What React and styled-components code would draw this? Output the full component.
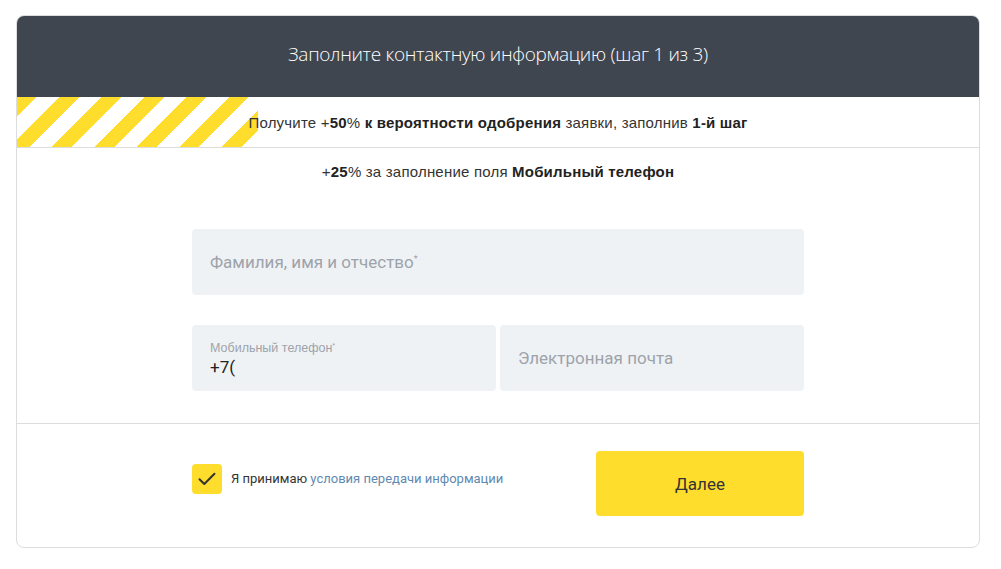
import React from "react";
import styled, { createGlobalStyle } from "styled-components";

const GlobalStyle = createGlobalStyle`
  body {
    margin: 0;
    background: #fff;
    font-family: "Liberation Sans", Arial, sans-serif;
    color: #333;
  }
`;

const App = () => {
  return (
    <>
      <GlobalStyle />
      <Card>
        <Header>Заполните контактную информацию (шаг 1 из 3)</Header>
        <Banner>
          <Stripes />
          <BannerText>
            Получите +<b>50</b>% <b>к вероятности одобрения</b> заявки, заполнив <b>1-й шаг</b>
          </BannerText>
        </Banner>
        <Body>
          <Hint>
            +<b>25</b>% за заполнение поля <b>Мобильный телефон</b>
          </Hint>
          <Form>
            <Field wide>
              <Placeholder>
                Фамилия, имя и отчество<sup>*</sup>
              </Placeholder>
            </Field>
            <Field>
              <SmallLabel>
                Мобильный телефон<sup>*</sup>
              </SmallLabel>
              <Value>+7(</Value>
            </Field>
            <Field>
              <Placeholder>Электронная почта</Placeholder>
            </Field>
          </Form>
        </Body>
        <Footer>
          <FooterInner>
            <Agree>
              <Check>
                <svg width="18" height="14" viewBox="0 0 18 14" fill="none">
                  <path
                    d="M1.5 7.2 L6.3 12 L16.5 1.8"
                    stroke="#333"
                    strokeWidth="2"
                    strokeLinecap="round"
                    strokeLinejoin="round"
                  />
                </svg>
              </Check>
              <AgreeText>
                Я принимаю <Link href="#">условия передачи информации</Link>
              </AgreeText>
            </Agree>
            <NextButton>Далее</NextButton>
          </FooterInner>
        </Footer>
      </Card>
    </>
  );
};

export default App;

/* ------------------------------ */
/*        STYLED COMPONENTS       */
/* ------------------------------ */
const Card = styled.div`
  margin: 15px 0 0 16px;
  width: 962px;
  border: 1px solid #ddd;
  border-radius: 8px;
  overflow: hidden;
  background: #fff;
`;

const Header = styled.div`
  height: 82px;
  margin: -1px -1px 0;
  background: #40464f;
  color: #fff;
  display: flex;
  align-items: center;
  justify-content: center;
  font-family: "Open Sans", sans-serif;
  font-weight: 300;
  font-size: 19px;
  letter-spacing: -0.3px;
  padding-bottom: 4px;
  box-sizing: border-box;
`;

const Banner = styled.div`
  position: relative;
  height: 50px;
  border-bottom: 1px solid #ddd;
  display: flex;
  align-items: center;
  justify-content: center;
`;

const Stripes = styled.div`
  position: absolute;
  left: 0;
  top: 0;
  width: 241px;
  height: 100%;
  background: repeating-linear-gradient(
    135deg,
    #ffdd2d 0 14px,
    transparent 14px 30px
  );
`;

const BannerText = styled.div`
  position: relative;
  font-size: 15px;
  letter-spacing: 0.2px;
  color: #333;
  padding-top: 1px;
  b {
    color: #222;
  }
`;

const Body = styled.div`
  padding: 15px 0 32px;
  display: flex;
  flex-direction: column;
  align-items: center;
  border-bottom: 1px solid #ddd;
`;

const Hint = styled.div`
  font-size: 15px;
  letter-spacing: 0.2px;
  color: #333;
  margin-bottom: 49px;
  b {
    color: #222;
  }
`;

const Form = styled.div`
  width: 612px;
  display: grid;
  grid-template-columns: 1fr 1fr;
  column-gap: 4px;
  row-gap: 30px;
`;

const Field = styled.div`
  grid-column: ${(p) => (p.wide ? "1 / 3" : "auto")};
  height: 66px;
  background: #eff2f5;
  border-radius: 4px;
  padding: 0 18px;
  display: flex;
  flex-direction: column;
  justify-content: center;
  font-family: Roboto, sans-serif;
`;

const Placeholder = styled.div`
  font-size: 17px;
  color: #9da3aa;
  sup {
    font-size: 9px;
    vertical-align: 6px;
  }
`;

const SmallLabel = styled.div`
  font-family: "Liberation Sans", Arial, sans-serif;
  font-size: 12.5px;
  color: #9da3aa;
  margin-top: 2px;
  sup {
    font-size: 7px;
    vertical-align: 4px;
  }
`;

const Value = styled.div`
  font-size: 17px;
  color: #222;
  margin-top: 2px;
`;

const Footer = styled.div`
  padding: 27px 0 31px;
  display: flex;
  justify-content: center;
`;

const FooterInner = styled.div`
  width: 612px;
  display: flex;
  justify-content: space-between;
  align-items: flex-start;
`;

const Agree = styled.label`
  display: flex;
  align-items: center;
  gap: 9px;
  margin-top: 13px;
`;

const Check = styled.span`
  width: 30px;
  height: 30px;
  border-radius: 4px;
  background: #ffdd2d;
  display: flex;
  align-items: center;
  justify-content: center;
`;

const AgreeText = styled.span`
  font-family: Roboto, sans-serif;
  font-size: 13px;
  color: #333;
  margin-top: -1px;
`;

const Link = styled.a`
  color: #5f8ab0;
  text-decoration: none;
`;

const NextButton = styled.button`
  width: 208px;
  height: 65px;
  border: none;
  border-radius: 4px;
  background: #ffdd2d;
  color: #333;
  font-family: Roboto, sans-serif;
  font-size: 17px;
  cursor: pointer;
`;
